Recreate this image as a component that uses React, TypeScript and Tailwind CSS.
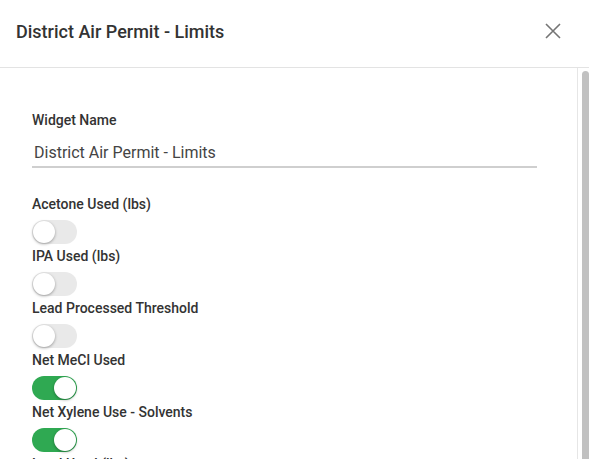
import { useState } from "react";

type Limit = { id: string; label: string; enabled: boolean };

const initialLimits: Limit[] = [
  { id: "acetone", label: "Acetone Used (lbs)", enabled: false },
  { id: "ipa", label: "IPA Used (lbs)", enabled: false },
  { id: "lead", label: "Lead Processed Threshold", enabled: false },
  { id: "mecl", label: "Net MeCl Used", enabled: true },
  { id: "xylene", label: "Net Xylene Use - Solvents", enabled: true },
  { id: "lead-used", label: "Lead Used (lbs)", enabled: false },
];

function Toggle({ on, onChange }: { on: boolean; onChange: () => void }) {
  return (
    <button
      type="button"
      role="switch"
      aria-checked={on}
      onClick={onChange}
      className={`relative block h-[24px] w-[45px] rounded-full transition-colors ${
        on ? "bg-[#2fa952]" : "bg-[#e9e9e9]"
      }`}
    >
      <span
        className={`absolute top-[1px] h-[22px] w-[22px] rounded-full bg-white shadow-[0_1px_3px_rgba(0,0,0,0.35)] transition-all ${
          on ? "left-[22px]" : "left-[1px]"
        }`}
      />
    </button>
  );
}

export default function App() {
  const [name, setName] = useState("District Air Permit - Limits");
  const [limits, setLimits] = useState(initialLimits);

  const toggle = (id: string) =>
    setLimits((prev) => prev.map((l) => (l.id === id ? { ...l, enabled: !l.enabled } : l)));

  return (
    <div className="flex h-[459px] w-full flex-col overflow-hidden bg-white font-['Roboto',sans-serif] text-[#333]">
      <header className="flex h-[68px] shrink-0 items-center justify-between border-b border-[#e3e3e3] pb-[5px] pl-4 pr-[28px]">
        <h2 className="text-[18px] font-medium text-[#333]">District Air Permit - Limits</h2>
        <button type="button" aria-label="Close" className="text-[#757575]">
          <svg width="16" height="16" viewBox="0 0 16 16" fill="none" stroke="currentColor" strokeWidth="1.6">
            <path d="M1 1L15 15M15 1L1 15" />
          </svg>
        </button>
      </header>

      <div className="flex min-h-0 flex-1">
        <div className="flex-1 overflow-hidden pl-8 pr-10 pt-[44px]">
          <label className="block text-[14px] font-medium leading-4">Widget Name</label>
          <input
            value={name}
            onChange={(e) => setName(e.target.value)}
            className="mt-[15px] w-full border-b-2 border-[#cfcfcf] pb-[3px] pl-[2px] text-[16px] leading-[20px] text-[#444] outline-none"
          />

          <div className="mt-[28px] flex flex-col">
            {limits.map((l) => (
              <div key={l.id} className="flex flex-col items-start">
                <span className="text-[14px] font-medium leading-4">{l.label}</span>
                <div className="mb-[4px] mt-[8px] flex">
                  <Toggle on={l.enabled} onChange={() => toggle(l.id)} />
                </div>
              </div>
            ))}
          </div>
        </div>

        <div className="flex w-[12px] shrink-0 justify-end border-l border-[#e6e6e6] pt-[3px]">
          <div className="h-full w-[7px] rounded-t-[4px] bg-[#c1c1c1]" />
        </div>
      </div>
    </div>
  );
}
